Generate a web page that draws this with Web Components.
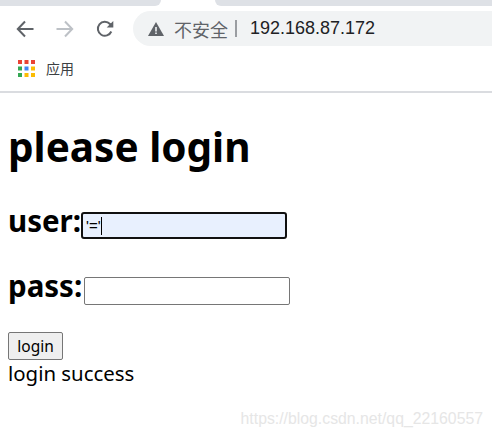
<!DOCTYPE html>
<html lang="zh-CN">
<head>
  <meta charset="UTF-8">
  <title>please login</title>
  <style>
    html, body { margin: 0; height: 100%; background: #fff; overflow: hidden; }
    body { font-family: "Noto Sans", "Noto Sans CJK SC", sans-serif; }
  </style>
</head>
<body>
  <template id="browser-chrome">
    <style>
      :host { display: block; height: 93px; box-sizing: border-box; border-bottom: 2px solid #dadce0; background: #fff; overflow: hidden; }
      .tabs { display: flex; height: 6px; }
      .tabs i { display: block; background: #dee1e6; }
      .tabs i:first-child { width: 161px; border-bottom-right-radius: 6px; }
      .tabs span { width: 54px; }
      .tabs i:last-child { flex: 1; border-bottom-left-radius: 6px; }
      .toolbar { display: flex; align-items: center; height: 35px; margin-top: 5px; padding-left: 16px; }
      .btn { width: 18px; height: 18px; margin-right: 22px; flex: none; }
      .btn.reload { margin-right: 19px; }
      .omnibox { flex: 1; display: flex; align-items: center; height: 35px; margin-right: -20px; padding-left: 15px; background: #f1f3f4; border-radius: 18px 0 0 18px; color: #5f6368; font-size: 18px; white-space: nowrap; }
      .omnibox svg { width: 16px; height: 14px; margin-right: 10px; flex: none; }
      .sep { width: 2px; height: 17px; background: #9a9da1; margin: 0 13px 0 7px; }
      .host { color: #202124; font: 18px "Liberation Sans", sans-serif; }
      .marks { display: flex; align-items: center; height: 34px; margin-top: 5px; padding-left: 18px; font-size: 14px; color: #3c4043; }
      .marks svg { width: 17px; height: 17px; margin-right: 11px; }
    </style>
    <div class="tabs"><i></i><span></span><i></i></div>
    <div class="toolbar">
      <svg class="btn" viewBox="0 0 18 18" fill="none" stroke="#5f6368" stroke-width="2"><path d="M17.5 9H2M9 1.5 1.8 9 9 16.5"/></svg>
      <svg class="btn" viewBox="0 0 18 18" fill="none" stroke="#bdc1c6" stroke-width="2"><path d="M.5 9H16M9 1.5 16.2 9 9 16.5"/></svg>
      <svg class="btn reload" viewBox="0 0 18 18"><path fill="none" stroke="#5f6368" stroke-width="2" d="M15.3 11.5A7 7 0 1 1 14 4l1.5 1.8"/><path fill="#5f6368" d="M17.3 1v6.6h-6.6z"/></svg>
      <div class="omnibox">
        <svg viewBox="0 0 16 14"><path fill="#5f6368" d="M8 0l8 14H0z"/><path fill="#f1f3f4" d="M7.2 5h1.6v4.4H7.2zM7.2 10.4h1.6V12H7.2z"/></svg>
        <span>不安全</span><span class="sep"></span><span class="host">192.168.87.172</span>
      </div>
    </div>
    <div class="marks">
      <svg viewBox="0 0 17 17">
        <g fill="#ea4335"><rect x="0" y="0" width="4" height="4"/><rect x="6.5" y="0" width="4" height="4"/><rect x="13" y="0" width="4" height="4"/></g>
        <rect x="0" y="6.5" width="4" height="4" fill="#34a853"/><rect x="6.5" y="6.5" width="4" height="4" fill="#4285f4"/><rect x="13" y="6.5" width="4" height="4" fill="#fbbc04"/>
        <rect x="0" y="13" width="4" height="4" fill="#34a853"/><rect x="6.5" y="13" width="4" height="4" fill="#fbbc04"/><rect x="13" y="13" width="4" height="4" fill="#fbbc04"/>
      </svg>
      <span>应用</span>
    </div>
  </template>

  <template id="login-field">
    <style>
      :host { display: flex; align-items: center; height: 39px; font-size: 29.5px; font-weight: 700; color: #000; }
      .box { box-sizing: border-box; width: 206px; height: 28px; margin: 10px 0 0 2px; padding: 0 3px; display: flex; align-items: center; border: 1px solid #767676; border-radius: 2px; background: #fff; font: 400 15px "Liberation Sans", sans-serif; }
      :host([focused]) .box { background: #e8f0fe; border: 2px solid #101010; border-radius: 3px; margin-left: 0; height: 27px; }
      .caret { width: 1px; height: 18px; background: #000; }
    </style>
    <slot></slot><div class="box"><span id="value"></span><span class="caret" id="caret"></span></div>
  </template>

  <template id="login-page">
    <style>
      :host { display: block; position: relative; padding: 0 8px; height: 340px; color: #000; }
      h1 { margin: 0; padding-top: 22px; height: 64px; font-size: 40.5px; line-height: 64px; font-weight: 700; }
      .fields { display: flex; flex-direction: column; gap: 26px; margin-top: 22px; }
      button { display: block; box-sizing: border-box; width: 55px; height: 28px; margin-top: 27px; padding: 0; border: 1px solid #767676; border-radius: 2px; background: #efefef; color: #000; font: 15.5px "Noto Sans", sans-serif; }
      .msg { font-size: 20.4px; line-height: 27px; }
      .mark { position: absolute; right: 9px; bottom: 5px; color: #e6e6e6; font: 15.8px "Liberation Sans", sans-serif; }
    </style>
    <h1>please login</h1>
    <div class="fields">
      <login-field focused value="'='">user:</login-field>
      <login-field>pass:</login-field>
    </div>
    <button>login</button>
    <div class="msg">login success</div>
    <div class="mark">https://blog.csdn.net/qq_22160557</div>
  </template>

  <browser-chrome></browser-chrome>
  <login-page></login-page>

  <script>
    class BrowserChrome extends HTMLElement {
      constructor() {
        super()
        this.attachShadow({ mode: 'open' })
        this.shadowRoot.appendChild(document.querySelector('#browser-chrome').content.cloneNode(true))
      }
    }
    class LoginField extends HTMLElement {
      constructor() {
        super()
        this.attachShadow({ mode: 'open' })
        this.shadowRoot.appendChild(document.querySelector('#login-field').content.cloneNode(true))
      }
      connectedCallback() {
        this.shadowRoot.querySelector('#value').textContent = this.getAttribute('value') || ''
        if (!this.hasAttribute('focused')) this.shadowRoot.querySelector('#caret').remove()
      }
    }
    class LoginPage extends HTMLElement {
      constructor() {
        super()
        this.attachShadow({ mode: 'open' })
        this.shadowRoot.appendChild(document.querySelector('#login-page').content.cloneNode(true))
      }
    }
    customElements.define('browser-chrome', BrowserChrome)
    customElements.define('login-field', LoginField)
    customElements.define('login-page', LoginPage)
  </script>
</body>
</html>
